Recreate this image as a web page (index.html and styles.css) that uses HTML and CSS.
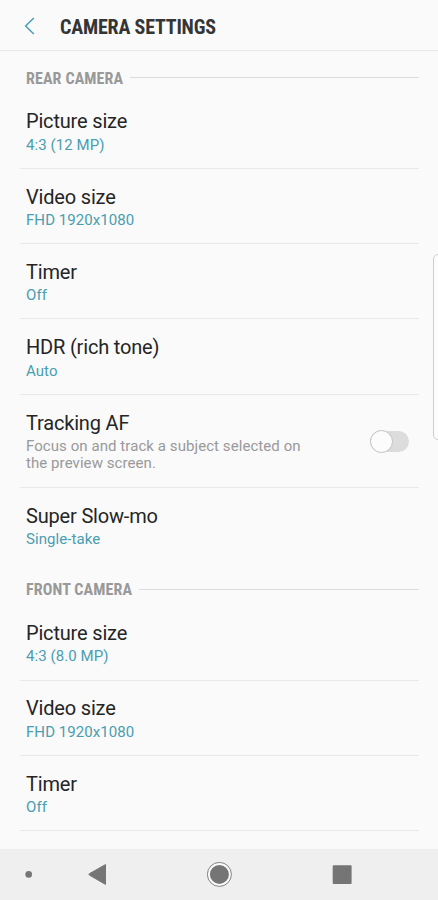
FILE: index.html
```html
<!DOCTYPE html>
<html lang="en">
<head>
<meta charset="utf-8">
<title>Camera settings</title>
<link rel="stylesheet" href="styles.css">
</head>
<body>
<div class="screen">
  <header class="topbar">
    <svg class="back" width="12" height="18" viewBox="0 0 12 18"><path d="M9.8 1 1.6 9l8.2 8" fill="none" stroke="#4a9db2" stroke-width="1.5"/></svg>
    <h1 class="title">CAMERA SETTINGS</h1>
  </header>
  <main class="settings">
    <section>
      <h2 class="group"><span class="group-name">REAR CAMERA</span></h2>
      <ul class="list">
        <li class="item"><div class="name">Picture size</div><div class="value">4:3 (12 MP)</div></li>
        <li class="item"><div class="name">Video size</div><div class="value">FHD 1920x1080</div></li>
        <li class="item"><div class="name">Timer</div><div class="value">Off</div></li>
        <li class="item"><div class="name">HDR (rich tone)</div><div class="value">Auto</div></li>
        <li class="item switchable">
          <div><div class="name">Tracking AF</div><div class="value note">Focus on and track a subject selected on<br>the preview screen.</div></div>
          <span class="switch"><span class="knob"></span></span>
        </li>
        <li class="item last"><div class="name">Super Slow-mo</div><div class="value">Single-take</div></li>
      </ul>
    </section>
    <section>
      <h2 class="group"><span class="group-name">FRONT CAMERA</span></h2>
      <ul class="list">
        <li class="item"><div class="name">Picture size</div><div class="value">4:3 (8.0 MP)</div></li>
        <li class="item"><div class="name">Video size</div><div class="value">FHD 1920x1080</div></li>
        <li class="item"><div class="name">Timer</div><div class="value">Off</div></li>
      </ul>
    </section>
  </main>
  <nav class="navbar">
    <svg width="438" height="51" viewBox="0 0 438 51" fill="#757575">
      <circle cx="28.7" cy="25.4" r="3.3"/>
      <path d="M105.5 15.6v19.8L89.4 26.1q-1-.7 0-1.4Z" stroke="#757575" stroke-width="1" stroke-linejoin="round"/>
      <circle cx="219.4" cy="25.4" r="12" fill="#fafafa" stroke="#757575" stroke-width=".9"/>
      <circle cx="219.4" cy="25.4" r="9.5"/>
      <rect x="332.7" y="16.2" width="18.9" height="18.8" rx=".8"/>
    </svg>
  </nav>
  <div class="edge-handle"></div>
</div>
</body>
</html>
```
FILE: styles.css
```css
* { box-sizing: border-box; }
body { margin: 0; background: #fafafa; font-family: Roboto, sans-serif; }
.screen { position: relative; display: flex; flex-direction: column; width: 438px; height: 900px; overflow: hidden; }
.topbar { flex: none; display: flex; align-items: center; height: 51px; padding-left: 24px; border-bottom: 1px solid #e9e9e9; }
.back { flex: none; margin: 1px 24px 0 0; }
h1, h2, ul { margin: 0; padding: 0; }
.title, .group { font-family: "Roboto Condensed", Roboto, sans-serif; font-stretch: 75%; font-weight: 700; white-space: nowrap; }
.title { padding-top: 3px; font-size: 20px; line-height: 24px; letter-spacing: -0.2px; color: #353535; }
.settings { flex: 1; min-height: 0; overflow: hidden; }
.group { display: flex; align-items: center; gap: 7px; height: 42.6px; padding: 11px 19px 0 26px; font-size: 16px; line-height: 20px; letter-spacing: 0.12px; color: #999; }
.group-name { padding-top: 2px; }
.group::after { content: ""; flex: 1; height: 1px; margin-bottom: 0.6px; background: #dcdcdc; }
.list { list-style: none; padding: 0 19px 0 20px; }
.item { height: 75.3px; padding: 15.8px 0 0 6px; border-bottom: 1px solid #e9e9e9; }
.item.last { height: 74.7px; border-bottom: 0; }
.name { font-size: 20px; line-height: 24px; letter-spacing: -0.18px; color: #252525; }
.value { margin-top: 3.3px; font-size: 15px; line-height: 17.5px; letter-spacing: 0.07px; color: #4a9db2; }
.value.note { color: #999; }
.switchable { display: flex; justify-content: space-between; height: 93.2px; padding-right: 10px; }
.switch { flex: none; display: flex; align-items: center; width: 39px; height: 21px; margin-top: 20px; border-radius: 11px; background: #dcdcdc; }
.knob { width: 23px; height: 23px; border: 1px solid #c2c2c2; border-radius: 50%; background: #fcfcfc; }
.navbar { flex: none; height: 51px; background: #efefef; }
.navbar svg { display: block; }
.edge-handle { position: absolute; top: 254px; right: -6px; width: 11px; height: 186px; border: 1px solid #cecece; border-radius: 5px; background: #fcfcfc; }
```
